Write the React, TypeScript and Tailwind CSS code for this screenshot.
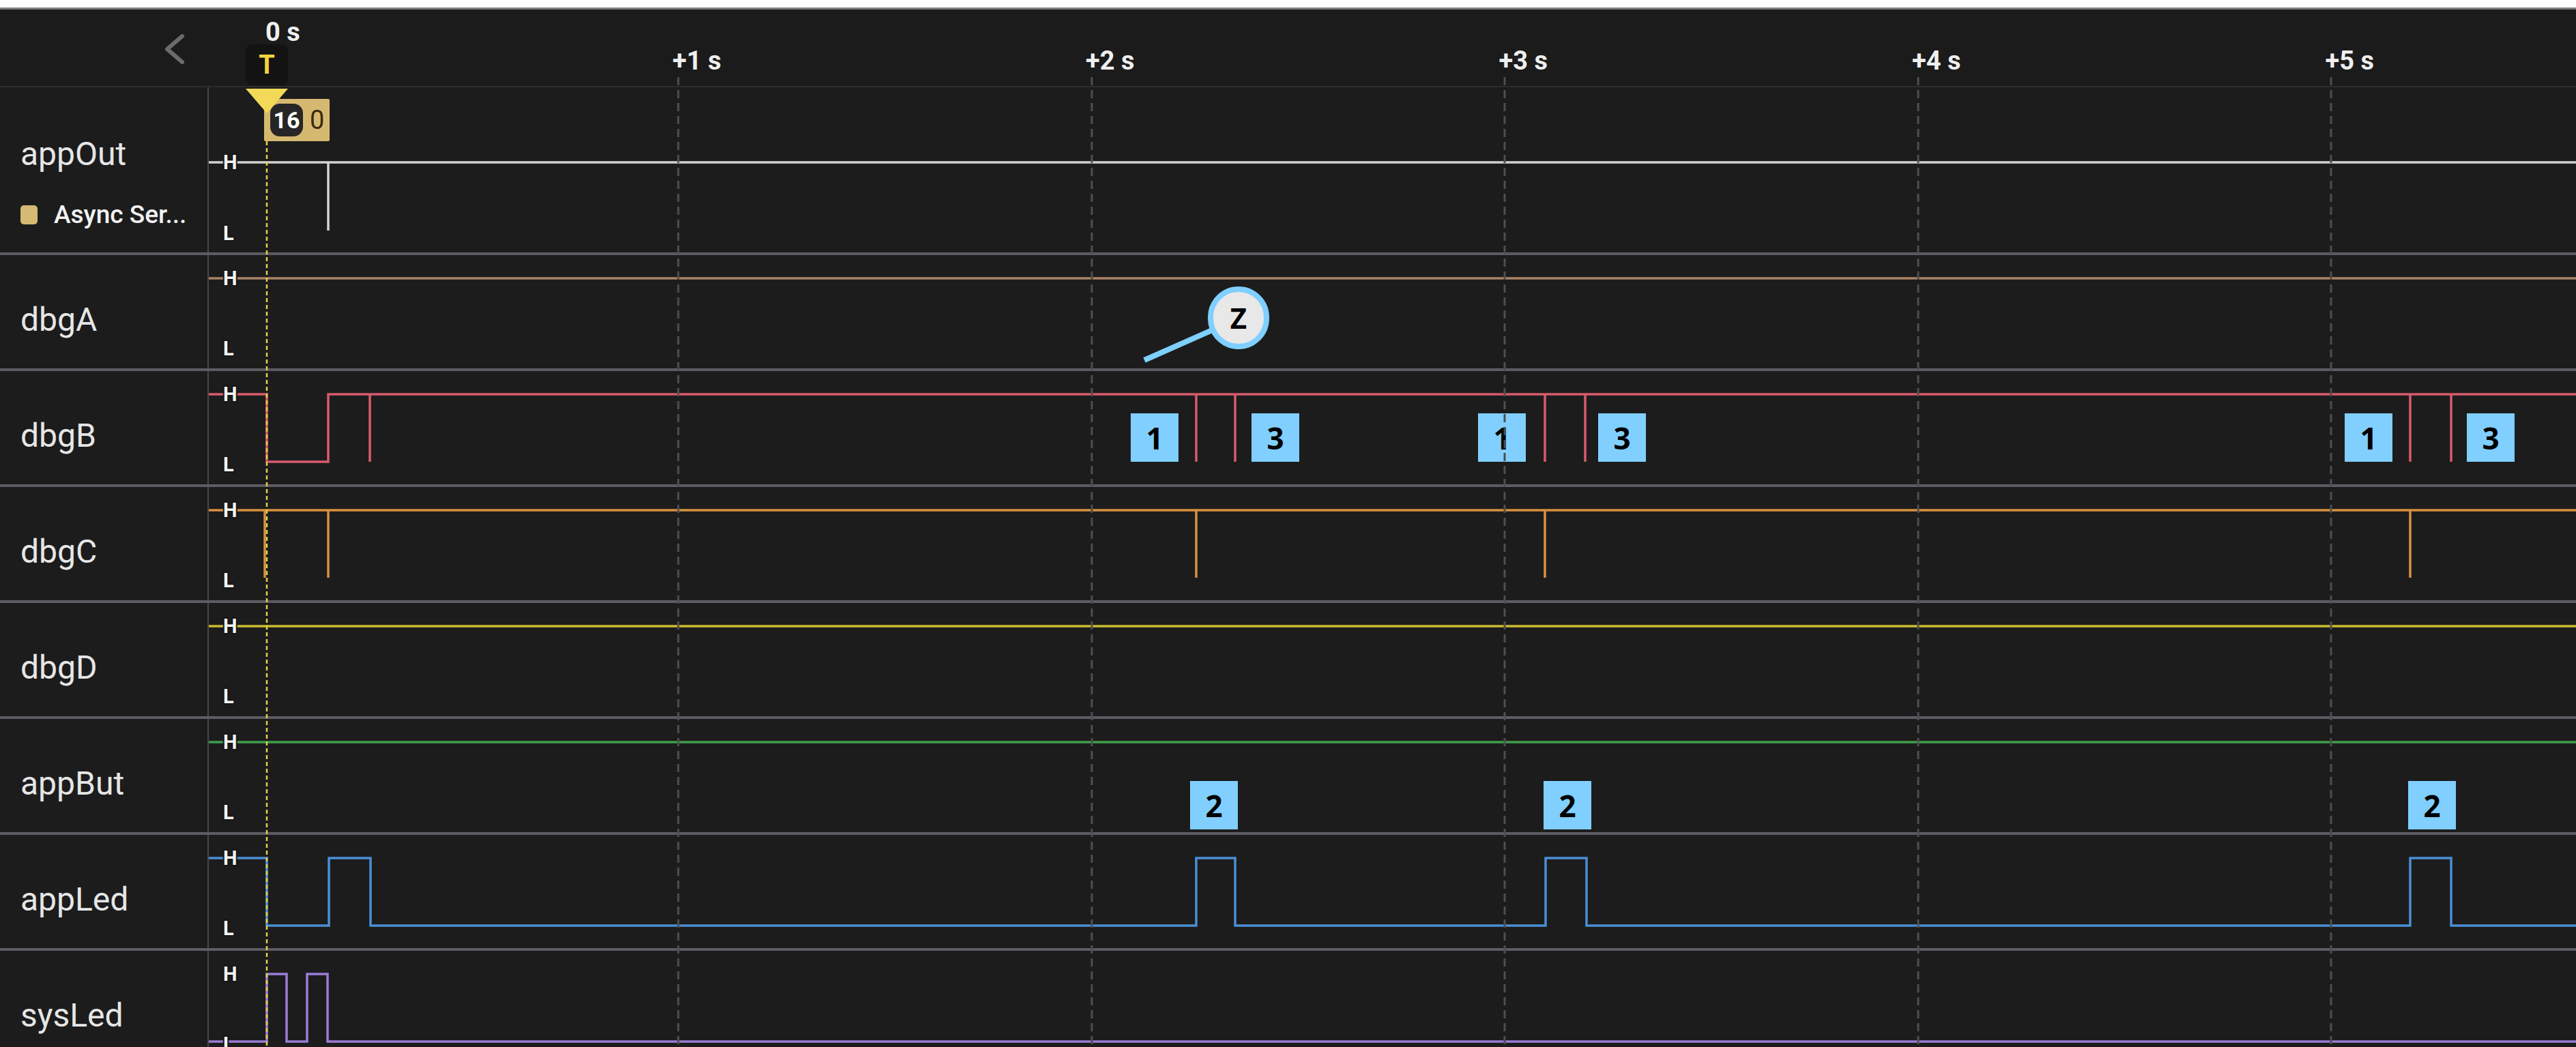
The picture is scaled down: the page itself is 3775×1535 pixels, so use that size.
import React from 'react'

const X0 = 306
const W = 3775 - X0
const TICKS = [994, 1600, 2205, 2811, 3416]

// builds a step path: every edge flips the level, a doubled edge is a glitch
function wave(hy: number, ly: number, start: 'H' | 'L', edges: number[]) {
  let high = start === 'H'
  let d = `M${X0} ${high ? hy : ly}`
  for (const x of edges) {
    high = !high
    d += ` H${x} V${high ? hy : ly}`
  }
  return d + ' H3775'
}

type RowProps = {
  name: string
  color: string
  start: 'H' | 'L'
  edges: number[]
  last?: boolean
  children?: React.ReactNode
}

function Levels({ hy, ly }: { hy: number; ly: number }) {
  return (
    <>
      <text x={327} y={hy + 10} fontSize={29} fontWeight={700} fill="#f4f4f4" stroke="#151515" strokeWidth={4} paintOrder="stroke">
        H
      </text>
      <text x={327} y={ly + 14} fontSize={29} fontWeight={700} fill="#f4f4f4" stroke="#151515" strokeWidth={4} paintOrder="stroke">
        L
      </text>
    </>
  )
}

function SignalRow({ name, color, start, edges, last, children }: RowProps) {
  const hy = 34
  const ly = 133
  return (
    <div className={last ? 'flex h-[170px] shrink-0' : 'flex h-[170px] shrink-0 border-b-4 border-[#5d5c64]'}>
      <div className="w-[306px] shrink-0 border-r-2 border-[#474747] pl-[30px] pt-[71px] text-[48px] leading-none text-[#e6e6e6]">
        {name}
      </div>
      <div className="relative flex-1">
        <svg width={W} height={166} viewBox={`${X0} 0 ${W} 166`} className="block">
          <path d={wave(hy, ly, start, edges)} fill="none" stroke={color} strokeWidth={3.5} />
          <Levels hy={hy} ly={ly} />
        </svg>
        {children}
      </div>
    </div>
  )
}

function Tag({ n, className }: { n: string; className: string }) {
  return (
    <div
      className={
        'absolute flex h-[71px] w-[70px] items-center justify-center bg-[#80cfff] font-["Open_Sans",sans-serif] text-[44px] font-bold leading-none text-black ' +
        className
      }
    >
      {n}
    </div>
  )
}

export default function App() {
  return (
    <div className="relative h-[1535px] w-[3775px] overflow-hidden bg-white font-['Roboto',sans-serif]">
      <div className="h-[11px] bg-white" />
      <div className="flex h-[1524px] flex-col bg-[#1c1c1c]">
        {/* time ruler */}
        <div className="flex h-[117px] shrink-0 overflow-hidden border-t-[3px] border-b-2 border-t-[#7d7d7d] border-b-[#2c2c2c] bg-[#1b1b1b]">
          <div className="w-[306px] shrink-0 pl-[240px] pt-[36px]">
            <svg width={32} height={44} viewBox="0 0 32 44">
              <path d="M27 3 L5 22 L27 41" fill="none" stroke="#6b6b6b" strokeWidth={6} strokeLinecap="round" strokeLinejoin="round" />
            </svg>
          </div>
          <div className="flex pl-[83px]">
            <div className="flex w-[605.5px] shrink-0 flex-col items-start pt-[14px]">
              <span className="block text-[38px] font-bold leading-none text-[#efefef]">0 s</span>
              <div className="-ml-[29px] -mt-[1px] flex h-[60px] w-[62px] items-center justify-center rounded-[10px] bg-[#131313] text-[38px] font-bold leading-none text-[#f3d43c]">
                T
              </div>
            </div>
            {['+1 s', '+2 s', '+3 s', '+4 s', '+5 s'].map((l) => (
              <div key={l} className="w-[605.5px] shrink-0 pt-[56px]">
                <span className="-ml-[9px] block text-[38px] font-bold leading-none text-[#efefef]">{l}</span>
              </div>
            ))}
          </div>
        </div>

        {/* appOut with analyzer */}
        <div className="flex h-[246px] shrink-0 border-b-4 border-[#5d5c64]">
          <div className="w-[306px] shrink-0 border-r-2 border-[#474747] pl-[30px] pt-[74px] text-[#e6e6e6]">
            <div className="text-[48px] leading-none">appOut</div>
            <div className="mt-[46px] flex items-center gap-[24px]">
              <span className="h-[28px] w-[25px] rounded-[5px] bg-[#d5ba74]" />
              <span className="text-[37px] font-medium leading-none text-[#f2f2f2]">Async Ser...</span>
            </div>
          </div>
          <div className="relative flex-1">
            <svg width={W} height={242} viewBox={`${X0} 0 ${W} 242`} className="block">
              <path d={wave(110, 210, 'H', [481, 481])} fill="none" stroke="#d2d2d2" strokeWidth={3.5} />
              <Levels hy={110} ly={210} />
            </svg>
            <div className="absolute left-[81px] top-[17px] flex h-[62px] w-[96px] items-center gap-[10px] rounded-[2px] bg-[#d6b970] pl-[9px]">
              <span className="flex h-[48px] w-[48px] items-center justify-center rounded-[14px] bg-[#262626] text-[34px] font-bold leading-none text-white">
                16
              </span>
              <span className="text-[38px] leading-none text-[#3a2a10]">0</span>
            </div>
          </div>
        </div>

        <SignalRow name="dbgA" color="#ab8266" start="H" edges={[]}>
          <div className="absolute left-[1464px] top-[46px] flex h-[92px] w-[90px] items-center justify-center rounded-full border-[8px] border-[#7fcfff] bg-[#e8e8e8] font-['Open_Sans',sans-serif] text-[42px] font-bold leading-none text-black">
            Z
          </div>
        </SignalRow>

        <SignalRow
          name="dbgB"
          color="#d95a6c"
          start="H"
          edges={[391, 481, 542, 542, 1753, 1753, 1810, 1810, 2264, 2264, 2323, 2323, 3532, 3532, 3592, 3592]}
        >
          <Tag n="1" className="left-[1351px] top-[62px]" />
          <Tag n="3" className="left-[1528px] top-[62px]" />
          <Tag n="1" className="left-[1860px] top-[62px]" />
          <Tag n="3" className="left-[2036px] top-[62px]" />
          <Tag n="1" className="left-[3130px] top-[62px]" />
          <Tag n="3" className="left-[3309px] top-[62px]" />
        </SignalRow>

        <SignalRow
          name="dbgC"
          color="#d8913f"
          start="H"
          edges={[388, 388, 481, 481, 1753, 1753, 2264, 2264, 3532, 3532]}
        />

        <SignalRow name="dbgD" color="#cdbb2e" start="H" edges={[]} />

        <SignalRow name="appBut" color="#3f9f4b" start="H" edges={[]}>
          <Tag n="2" className="left-[1438px] top-[91px]" />
          <Tag n="2" className="left-[1956px] top-[91px]" />
          <Tag n="2" className="left-[3223px] top-[91px]" />
        </SignalRow>

        <SignalRow
          name="appLed"
          color="#4a8fd6"
          start="H"
          edges={[391, 482, 543, 1753, 1810, 2265, 2325, 3532, 3592]}
        />

        <SignalRow name="sysLed" color="#9a7dd6" start="L" edges={[391, 420, 450, 480]} last />
      </div>

      {/* grid, trigger marker and callout tail */}
      <svg width={3775} height={1535} viewBox="0 0 3775 1535" className="pointer-events-none absolute left-0 top-0">
        {TICKS.map((x) => (
          <line key={x} x1={x} y1={113} x2={x} y2={1535} stroke="#4e4e4e" strokeWidth={3} strokeDasharray="12 7" />
        ))}
        <line x1={391} y1={207} x2={391} y2={1535} stroke="#e3cf45" strokeWidth={2.5} strokeDasharray="6 4" />
        <polygon points="360,130 422,130 391,166" fill="#f2d957" />
        <line x1={1677} y1={528} x2={1781} y2={482} stroke="#7fcfff" strokeWidth={8} />
      </svg>
    </div>
  )
}
